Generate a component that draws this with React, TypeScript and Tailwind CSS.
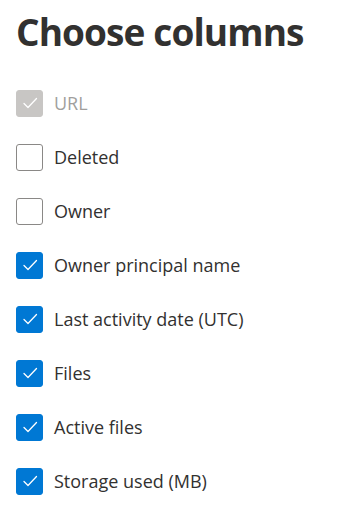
import React from 'react';

type Column = { label: string; checked: boolean; disabled?: boolean };

const columns: Column[] = [
  { label: 'URL', checked: true, disabled: true },
  { label: 'Deleted', checked: false },
  { label: 'Owner', checked: false },
  { label: 'Owner principal name', checked: true },
  { label: 'Last activity date (UTC)', checked: true },
  { label: 'Files', checked: true },
  { label: 'Active files', checked: true },
  { label: 'Storage used (MB)', checked: true },
];

const Check = () => (
  <svg viewBox="0 0 20 20" className="h-[20px] w-[20px]" fill="none" stroke="white" strokeWidth={1.3} strokeLinecap="round" strokeLinejoin="round">
    <path d="M4 10.5l4 4 8.5-9" />
  </svg>
);

export default function App() {
  return (
    <div className="min-h-[517px] w-[349px] bg-white pl-4 pt-[6px] text-[#323130]" style={{ fontFamily: '"Open Sans", "Noto Sans", sans-serif' }}>
      <h1 className="text-[37px] font-bold leading-[52px] tracking-[-0.9px]">Choose columns</h1>
      <div className="mt-[18px] flex flex-col">
        {columns.map(col => (
          <label key={col.label} className="flex h-[54px] items-center gap-[11px]">
            <span
              className={`flex h-[27px] w-[27px] items-center justify-center rounded-[3px] border ${
                col.disabled
                  ? 'border-[#c8c6c4] bg-[#c8c6c4]'
                  : col.checked
                  ? 'border-[#0078d4] bg-[#0078d4]'
                  : 'border-[#8a8886] bg-white'
              }`}
            >
              {col.checked && <Check />}
            </span>
            <span className={`text-[18px] ${col.disabled ? 'text-[#a19f9d]' : 'text-[#323130]'}`}>{col.label}</span>
          </label>
        ))}
      </div>
    </div>
  );
}
